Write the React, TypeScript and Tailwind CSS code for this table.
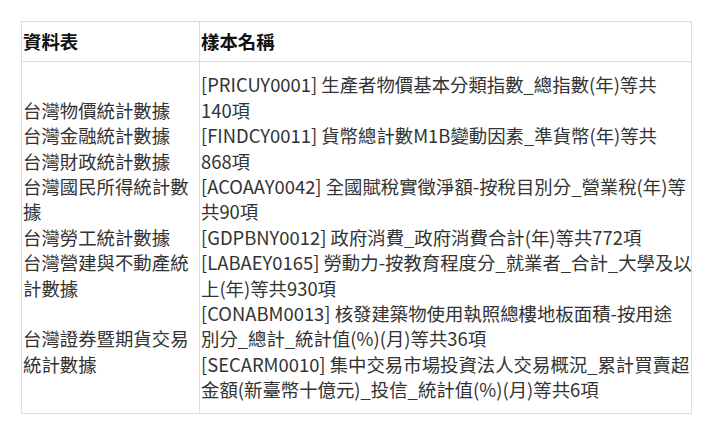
const tables = [
  "台灣物價統計數據",
  "台灣金融統計數據",
  "台灣財政統計數據",
  "台灣國民所得統計數",
  "據",
  "台灣勞工統計數據",
  "台灣營建與不動產統",
  "計數據",
  "",
  "台灣證券暨期貨交易",
  "統計數據",
]

const samples = [
  ["[PRICUY0001] 生產者物價基本分類指數_總指數(年)等共", "140項"],
  ["[FINDCY0011] 貨幣總計數M1B變動因素_準貨幣(年)等共", "868項"],
  ["[ACOAAY0042] 全國賦稅實徵淨額-按稅目別分_營業稅(年)等", "共90項"],
  ["[GDPBNY0012] 政府消費_政府消費合計(年)等共772項"],
  ["[LABAEY0165] 勞動力-按教育程度分_就業者_合計_大學及以", "上(年)等共930項"],
  ["[CONABM0013] 核發建築物使用執照總樓地板面積-按用途", "別分_總計_統計值(%)(月)等共36項"],
  ["[SECARM0010] 集中交易市場投資法人交易概況_累計買賣超", "金額(新臺幣十億元)_投信_統計值(%)(月)等共6項"],
]

export default function App() {
  return (
    <div className="min-h-screen bg-white p-[21px] font-['Noto_Sans_CJK_TC',sans-serif] text-[18.4px] leading-[25.4px] text-[#333]">
      <table className="w-[671px] table-fixed border-collapse border border-[#ddd]">
        <colgroup>
          <col className="w-[178px]" />
          <col />
        </colgroup>
        <thead>
          <tr>
            <th className="border border-[#ddd] px-[1px] py-[7px] text-left font-bold text-[#111]">資料表</th>
            <th className="border border-[#ddd] px-[1px] py-[7px] text-left font-bold text-[#111]">樣本名稱</th>
          </tr>
        </thead>
        <tbody>
          <tr>
            <td className="border border-[#ddd] px-[1px] py-[10px] align-middle">
              {tables.map((t, i) => (
                <div key={i} className="h-[25.4px] whitespace-nowrap">
                  {t}
                </div>
              ))}
            </td>
            <td className="border border-[#ddd] px-[1px] py-[10px] align-middle">
              {samples.map((lines, i) => (
                <div key={i}>
                  {lines.map((l, j) => (
                    <div key={j} className="whitespace-nowrap">
                      {l}
                    </div>
                  ))}
                </div>
              ))}
            </td>
          </tr>
        </tbody>
      </table>
    </div>
  )
}
